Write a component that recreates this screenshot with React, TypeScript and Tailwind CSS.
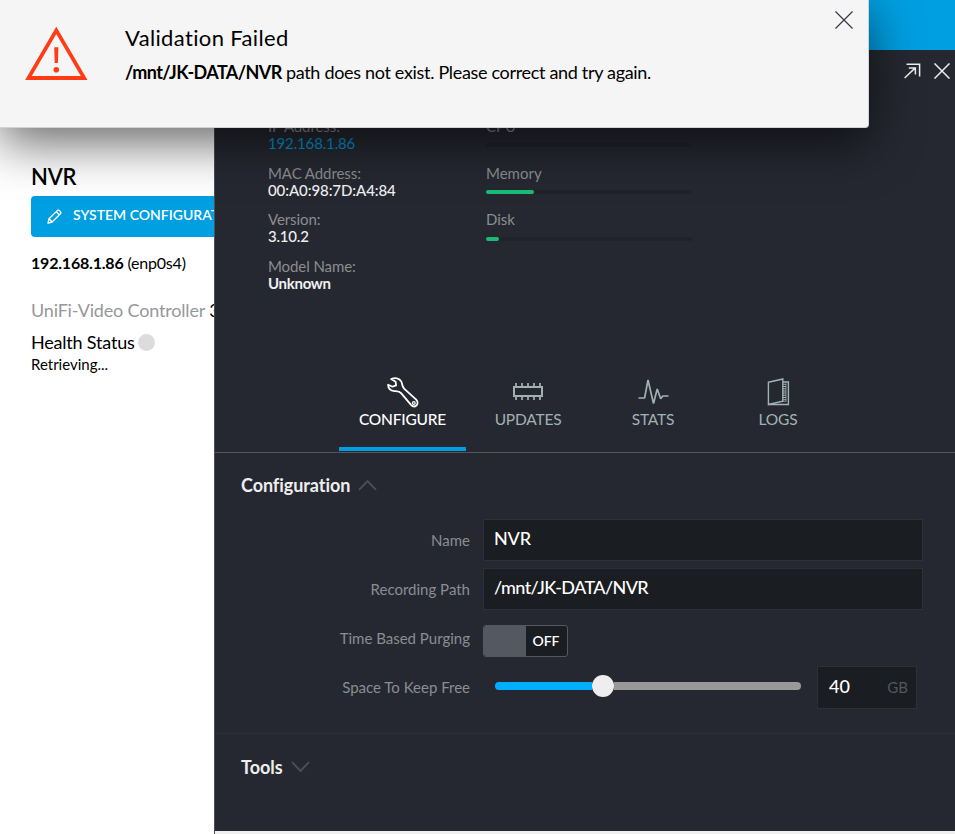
import { ReactNode } from 'react';

const DETAILS = [
  { label: 'IP Address:', value: '192.168.1.86', className: 'text-[#0093d0] tracking-[-0.15px]' },
  { label: 'MAC Address:', value: '00:A0:98:7D:A4:84', className: 'text-[#f0f0f0] font-medium tracking-[-0.08px]' },
  { label: 'Version:', value: '3.10.2', className: 'text-[#f0f0f0] font-medium tracking-[-0.2px]' },
  { label: 'Model Name:', value: 'Unknown', className: 'text-[#f0f0f0] font-bold tracking-[-0.3px]' },
];

const USAGE = [
  { label: 'CPU', percent: 0 },
  { label: 'Memory', percent: 23.2 },
  { label: 'Disk', percent: 6.3 },
];

function CrossIcon({ size, width = 1.2 }: { size: number; width?: number }) {
  return (
    <svg width={size} height={size} viewBox="0 0 18 18" fill="none" stroke="currentColor" strokeWidth={width}>
      <path d="M.5 .5 17.5 17.5M17.5 .5 .5 17.5" />
    </svg>
  );
}

function WarningIcon() {
  return (
    <svg width="63" height="54" viewBox="0 0 63 54" fill="none">
      <path d="M31.3 3.4 59.2 51H3.4Z" stroke="#ff3c16" strokeWidth="3.8" />
      <path d="M29.2 20.3h4.2l-.5 15.7h-3.2Z" fill="#ff3c16" />
      <circle cx="31.3" cy="42.7" r="2.8" fill="#ff3c16" />
    </svg>
  );
}

function PencilIcon() {
  return (
    <svg width="15" height="15" viewBox="0 0 15 15" fill="none" stroke="currentColor" strokeWidth="1.3" strokeLinejoin="round">
      <path d="M1 14 2 9.8 10.3 1.6Q11.3 .7 12.4 1.6L13.4 2.6Q14.3 3.7 13.4 4.7L5.2 13Z" />
      <path d="M2 9.8 5.2 13M9.4 2.8l2.9 2.9" />
    </svg>
  );
}

function ExpandIcon() {
  return (
    <svg width="17" height="16" viewBox="0 0 17 16" fill="none" stroke="currentColor" strokeWidth="1.5">
      <path d="M2.5 1.2H15.6V13.5M.6 15 11.3 4.9M4.8 5H11.4V11.6" />
    </svg>
  );
}

function WrenchIcon() {
  return (
    <svg width="32" height="31" viewBox="0 0 32 31" fill="none" stroke="currentColor" strokeWidth="1.8" strokeLinejoin="round">
      <path d="M4.2 2.1C8 .2 12.5 1 14.2 4.4C15.6 7.3 14.9 9.1 17.1 11.7L29.2 22.6C31 24.4 31 27 29.4 28.5C27.7 30 25.6 29.5 24 27.8L14.1 16.1C12.4 14.2 10.5 14.4 7.3 14.1C3.8 13.7 1.2 11.4 1.1 7.7L5.5 9.7L9.1 8.4L8.6 4.7Z" />
      <circle cx="26.8" cy="26" r="1.4" strokeWidth="1.2" />
    </svg>
  );
}

function ChipIcon() {
  return (
    <svg width="32" height="17" viewBox="0 0 32 17" fill="none" stroke="currentColor" strokeWidth="2">
      <rect x="2" y="4" width="28" height="9" />
      <path d="M4 0v4M10 0v4M16 0v4M22 0v4M28 0v4M4 13v4M10 13v4M16 13v4M22 13v4M28 13v4" strokeWidth="1.7" />
    </svg>
  );
}

function PulseIcon() {
  return (
    <svg width="31" height="28" viewBox="0 0 31 28" fill="none" stroke="currentColor" strokeWidth="1.7" strokeLinejoin="bevel">
      <path d="M.5 20H6.6L10 2 15.5 25.5 19.2 11 22.7 20.7 24.8 18H30.5" />
    </svg>
  );
}

function BookIcon() {
  return (
    <svg width="23" height="28" viewBox="0 0 23 28" fill="none" stroke="currentColor" strokeWidth="1.4">
      <path d="M1.4 4.3 15.8 1V23.2L1.4 26.5Z" />
      <path d="M1.4 26.5H21.4V4H16" />
      <path d="M17.5 5.8V24" strokeWidth="3" strokeDasharray="1 1.2" />
      <path d="M19 5.5V24" strokeWidth=".7" />
    </svg>
  );
}

function Chevron({ up = false }: { up?: boolean }) {
  return (
    <svg width="19" height="12" viewBox="0 0 19 12" fill="none" stroke="#4b4f58" strokeWidth="1.9">
      <path d={up ? 'M1 10.8 9.5 2 18 10.8' : 'M1 1.2 9.5 10 18 1.2'} />
    </svg>
  );
}

function Tab({ label, icon, active = false }: { label: string; icon: ReactNode; active?: boolean }) {
  return (
    <div
      className={`flex flex-col items-center h-[75px] border-b-4 ${
        active ? 'w-[127px] text-white border-[#009fe1]' : 'w-[125px] pr-px text-[#a2b2b2] border-transparent'
      }`}
    >
      <div className={`h-[33px] flex items-center ${active ? 'pb-px' : 'pb-[2px]'}`}>{icon}</div>
      <span className={`text-[15.5px] leading-[21px] tracking-[-0.2px] ${active ? 'font-medium' : ''}`}>{label}</span>
    </div>
  );
}

function FieldRow({ label, className = '', children }: { label: string; className?: string; children: ReactNode }) {
  return (
    <div className={`flex items-center ${className}`}>
      <span className="w-[255px] mr-[13px] text-right text-[15px] text-[#8b8d90]">{label}</span>
      {children}
    </div>
  );
}

function TextBox({ value, className = '' }: { value: string; className?: string }) {
  return (
    <div className={`w-[440px] h-[42px] px-[10px] bg-[#1a1d21] border border-[#2d3037] text-lg leading-[36px] font-medium text-white ${className}`}>
      {value}
    </div>
  );
}

function Sidebar() {
  return (
    <div className="w-[214px] pl-[31px] pt-[112px] overflow-hidden whitespace-nowrap text-black">
      <h1 className="text-[22px] leading-[30px] font-semibold tracking-[-0.2px]">NVR</h1>
      <div className="mt-1 w-[260px] h-[41px] rounded-[4px] bg-[#009fe1] text-white flex items-center pl-4">
        <PencilIcon />
        <span className="ml-[11px] -mt-[4px] text-[14px] font-semibold">SYSTEM CONFIGURATION</span>
      </div>
      <p className="mt-4 text-[16px] leading-5">
        <b className="tracking-[-0.2px]">192.168.1.86</b>
        <span className="tracking-[-0.2px]"> (enp0s4)</span>
      </p>
      <p className="mt-[25px] text-lg leading-6 tracking-[-0.18px] text-[#95989b]">
        UniFi-Video Controller <span className="text-black">3.10.2</span>
      </p>
      <div className="mt-2 flex items-center text-lg leading-6 tracking-[-0.2px]">
        Health Status
        <span className="ml-[3px] size-[17px] rounded-full bg-[#dcdcdc]" />
      </div>
      <p className="text-[15px] leading-5">Retrieving...</p>
    </div>
  );
}

function DetailsPanel() {
  return (
    <div className="w-[741px] h-[784px] border-l border-[#4b5158] bg-[#efefef]">
      <div className="h-[781px] bg-[#252831] overflow-hidden">
        <div className="h-[43px] pr-[5px] pb-px flex items-center justify-end gap-[13px] text-[#eeeeee]">
          <ExpandIcon />
          <CrossIcon size={16} width={1.7} />
        </div>

        <div className="mt-[25px] ml-[53px] h-[258px] flex text-[15px] leading-[17px]">
          <div className="w-[218px] flex flex-col gap-[12.6px]">
            {DETAILS.map((d) => (
              <div key={d.label}>
                <div className="text-[#8b8d90] tracking-[-0.08px]">{d.label}</div>
                <div className={d.className}>{d.value}</div>
              </div>
            ))}
          </div>
          <div className="w-[206px] flex flex-col gap-[12.6px]">
            {USAGE.map((u) => (
              <div key={u.label} className="h-[34px]">
                <div className="text-[#8b8d90]">{u.label}</div>
                <div className="mt-[8.4px] h-1 rounded-full bg-[#20232a]">
                  <div className="h-1 rounded-full bg-[#18bd74]" style={{ width: `${u.percent}%` }} />
                </div>
              </div>
            ))}
          </div>
        </div>

        <div className="pl-[124px] pb-px flex border-b border-[#55565a]">
          <Tab label="CONFIGURE" icon={<WrenchIcon />} active />
          <Tab label="UPDATES" icon={<ChipIcon />} />
          <Tab label="STATS" icon={<PulseIcon />} />
          <Tab label="LOGS" icon={<BookIcon />} />
        </div>

        <div className="h-[281px] pt-[19px] border-b border-[#2d3038]">
          <div className="ml-[26px] flex items-center gap-2 text-lg leading-[26px] tracking-[-0.06px] font-bold text-[#eeeeee]">
            Configuration
            <Chevron up />
          </div>
          <FieldRow label="Name" className="mt-[21px]">
            <TextBox value="NVR" className="tracking-[-0.2px]" />
          </FieldRow>
          <FieldRow label="Recording Path" className="mt-[7px]">
            <TextBox value="/mnt/JK-DATA/NVR" className="tracking-[-0.6px]" />
          </FieldRow>
          <FieldRow label="Time Based Purging" className="mt-[7px] h-[43px]">
            <div className="mt-[5px] w-[85px] h-[32px] flex rounded-[3px] border border-[#545861] bg-[#1a1d21] overflow-hidden">
              <div className="w-[42px] bg-[#545861]" />
              <span className="flex-1 pr-px text-center text-sm leading-[30px] font-semibold text-white">OFF</span>
            </div>
          </FieldRow>
          <FieldRow label="Space To Keep Free" className="mt-[6px] h-[43px]">
            <div className="ml-[12px] mr-[16px] mb-[3px] w-[306px] flex items-center">
              <div className="w-[97px] h-2 rounded-l-full bg-[#00aeff]" />
              <div className="size-[22px] rounded-full bg-[#eeeeee]" />
              <div className="flex-1 h-2 rounded-r-full bg-[#999999]" />
            </div>
            <div className="w-[100px] h-[43px] pl-[11px] pr-[8px] flex items-center justify-between bg-[#1a1d21] border border-[#2d3037]">
              <span className="mb-[3px] text-lg font-medium text-white">40</span>
              <span className="text-[15px] text-[#54575c]">GB</span>
            </div>
          </FieldRow>
        </div>

        <div className="mt-[20px] ml-[26px] flex items-center gap-2 text-lg leading-[26px] font-bold text-[#eeeeee]">
          Tools
          <Chevron />
        </div>
      </div>
    </div>
  );
}

function Toast() {
  return (
    <div className="absolute left-0 top-0 w-[869px] h-[128px] rounded-br-[4px] border-b border-r border-[#d0d2d3] bg-[#f5f5f5] text-black shadow-[0_15px_50px_rgba(0,0,0,0.6)] flex">
      <div className="ml-[25px] mt-[27px] w-[100px]">
        <WarningIcon />
      </div>
      <div className="flex-1 pt-[24px]">
        <h2 className="text-[22px] leading-[28px] tracking-[0.36px]">Validation Failed</h2>
        <p className="mt-[8px] text-lg leading-6">
          <b className="tracking-[-0.6px]">/mnt/JK-DATA/NVR</b>
          <span className="tracking-[-0.32px]"> path does not exist. Please correct and try again.</span>
        </p>
      </div>
      <div className="mt-[11px] mr-[15px] text-[#353a46]">
        <CrossIcon size={18} />
      </div>
    </div>
  );
}

export default function App() {
  return (
    <div className="relative w-[955px] h-[834px] overflow-hidden bg-white font-['Lato',sans-serif]">
      <div className="h-[50px] bg-[#009fe1]" />
      <div className="flex">
        <Sidebar />
        <DetailsPanel />
      </div>
      <Toast />
    </div>
  );
}
